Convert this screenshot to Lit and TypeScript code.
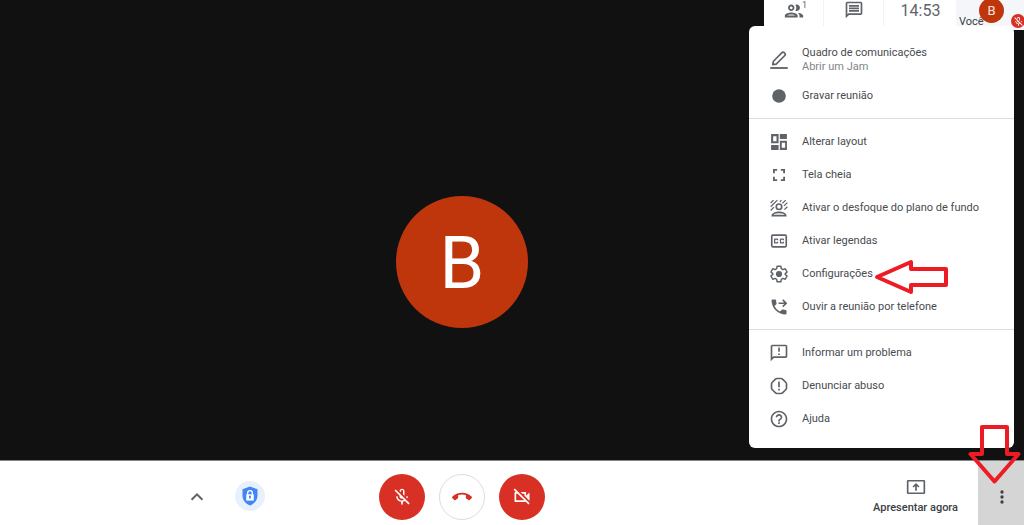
import { LitElement, html, svg, css, nothing } from "lit";
import { customElement } from "lit/decorators.js";

const ICONS = {
  people: svg`<path d="M9 13.75c-2.34 0-7 1.17-7 3.5V19h14v-1.75c0-2.33-4.66-3.5-7-3.5zM4.34 17c.84-.58 2.87-1.25 4.66-1.25s3.82.67 4.66 1.25H4.34zM9 12c1.93 0 3.5-1.57 3.5-3.5S10.93 5 9 5 5.5 6.57 5.5 8.5 7.07 12 9 12zm0-5c.83 0 1.5.67 1.5 1.5S9.83 10 9 10s-1.5-.67-1.5-1.5S8.17 7 9 7zm7.04 6.81c1.16.84 1.96 1.96 1.96 3.44V19h4v-1.75c0-2.02-3.5-3.17-5.96-3.44zM15 12c1.93 0 3.5-1.57 3.5-3.5S16.93 5 15 5c-.54 0-1.04.13-1.5.35.63.89 1 1.98 1 3.15s-.37 2.26-1 3.15c.46.22.96.35 1.5.35z"/>`,
  chat: svg`<path d="M4 4h16v12H5.17L4 17.17V4m0-2c-1.1 0-1.99.9-1.99 2L2 22l4-4h14c1.1 0 2-.9 2-2V4c0-1.1-.9-2-2-2H4zm2 10h12v2H6v-2zm0-3h12v2H6V9zm0-3h12v2H6V6z"/>`,
  jam: svg`<path d="M1.500 20.500h21v2.200h-21z"/><path fill="none" stroke="currentColor" stroke-width="2" stroke-linejoin="round" d="M4.500 17.500l.8-4L15.600 3.200a1.800 1.800 0 0 1 2.600 0l.8.8a1.800 1.800 0 0 1 0 2.600L8.600 16.900z"/>`,
  record: svg`<circle cx="12" cy="12" r="8.200"/>`,
  layout: svg`<path fill-rule="evenodd" d="M2.500 2.500h9v11h-9zM5 5v6h4V5zM13 2.500h8.500v6H13zM2.500 15.500h9v6h-9zM13 10.500h8.500v11H13zM15.300 13v6h4v-6z"/>`,
  fullscreen: svg`<path d="M4.800 4.800h5v2.200H7v3H4.800zM14.200 4.800h5v5.200H17V7h-2.800zM4.800 14H7v3h2.800v2.200h-5zM17 14h2.200v5.200h-5V17H17z"/>`,
  blur: svg`<g fill="none" stroke="currentColor" stroke-width="1.500"><circle cx="12" cy="10.500" r="3.300" stroke-width="2"/><path stroke-width="2.200" d="M4 21.200c0-2.500 4-4 8-4s8 1.500 8 4z"/><path d="M2 6L5.500 2.500M2 10.500L10 2.500M2 15l4-4M13 4.500l2-2M16 6.500l4-4M18 9.500L22 5.500M18.500 14L22 10.500"/></g>`,
  captions: svg`<path fill-rule="evenodd" d="M4.500 4h15A2.200 2.200 0 0 1 21.700 6.200v11.600A2.200 2.200 0 0 1 19.500 20h-15a2.200 2.200 0 0 1-2.200-2.200V6.200A2.200 2.200 0 0 1 4.500 4zM4.300 6v12h15.400V6z"/><path d="M11 11H9.500v-.5h-2v3h2V13H11v1c0 .55-.45 1-1 1H7c-.55 0-1-.45-1-1v-4c0-.55.45-1 1-1h3c.55 0 1 .45 1 1zM18 11h-1.500v-.5h-2v3h2V13H18v1c0 .55-.45 1-1 1h-3c-.55 0-1-.45-1-1v-4c0-.55.45-1 1-1h3c.55 0 1 .45 1 1z"/>`,
  settings: svg`<path fill="none" stroke="currentColor" stroke-width="1.800" stroke-linejoin="round" d="M9.800 2.700h4.400l.6 2.900 1.900 1.100 2.800-1 2.200 3.900-2.200 1.900v1l2.200 1.900-2.200 3.900-2.800-1-1.900 1.100-.6 2.900H9.800l-.6-2.900-1.900-1.100-2.800 1-2.200-3.900 2.200-1.900v-1L2.300 9.600l2.200-3.900 2.800 1 1.900-1.100z"/><circle cx="12" cy="12" r="3.700"/>`,
  phone: svg`<path d="M20 15.500c-1.250 0-2.450-.2-3.570-.57-.35-.11-.74-.03-1.020.24l-2.200 2.200c-2.830-1.440-5.150-3.750-6.590-6.580l2.200-2.210c.28-.27.36-.66.25-1.010C8.700 6.450 8.500 5.250 8.500 4c0-.55-.45-1-1-1H4c-.55 0-1 .45-1 1 0 9.390 7.610 17 17 17 .55 0 1-.45 1-1v-3.500c0-.55-.45-1-1-1z"/><path fill="none" stroke="currentColor" stroke-width="2" d="M11.500 7.500h8.500M16.500 3.500l4 4-4 4"/>`,
  feedback: svg`<path d="M20 2H4c-1.100 0-1.990.9-1.990 2L2 22l4-4h14c1.100 0 2-.9 2-2V4c0-1.100-.9-2-2-2zm0 14H5.170L4 17.170V4h16v12zM11 5.500h2v5h-2zM11 12.500h2v2h-2z"/>`,
  report: svg`<path fill="none" stroke="currentColor" stroke-width="2" stroke-linejoin="round" d="M9.500 3h5q1 0 1.700.7l4.100 4.100q.7.7.7 1.700v5q0 1-.7 1.700l-4.100 4.100q-.7.7-1.700.7h-5q-1 0-1.700-.7l-4.100-4.100Q3 15.500 3 14.500v-5q0-1 .7-1.700l4.100-4.100Q8.500 3 9.500 3z"/><path d="M11 6.500h2v7h-2zM11 15.200h2v2.200h-2z"/>`,
  help: svg`<path d="M11 18h2v-2h-2v2zm1-16C6.480 2 2 6.480 2 12s4.480 10 10 10 10-4.480 10-10S17.520 2 12 2zm0 18c-4.410 0-8-3.590-8-8s3.590-8 8-8 8 3.590 8 8-3.590 8-8 8zm0-14c-2.210 0-4 1.790-4 4h2c0-1.100.9-2 2-2s2 .9 2 2c0 2-3 1.750-3 5h2c0-2.250 3-2.500 3-5 0-2.210-1.790-4-4-4z"/>`,
  chevron: svg`<path fill="none" stroke="currentColor" stroke-width="2.400" d="M5.500 16.500L12 10l6.500 6.500"/>`,
  micOff: svg`<path d="M10.8 4.9c0-.66.54-1.2 1.2-1.2s1.2.54 1.2 1.2l-.01 3.91L15 10.6V5c0-1.66-1.34-3-3-3-1.54 0-2.79 1.16-2.96 2.65l1.76 1.76V4.9zM19 11h-1.7c0 .58-.1 1.13-.27 1.64l1.27 1.27c.44-.88.7-1.87.7-2.91zM4.41 2.86L3 4.27l6 6V11c0 1.66 1.34 3 3 3 .23 0 .44-.03.65-.08l1.66 1.66c-.71.33-1.5.52-2.31.52-2.76 0-5.3-2.1-5.3-5.1H5c0 3.41 2.72 6.23 6 6.72V21h2v-3.28c.91-.13 1.77-.45 2.55-.9l4.2 4.2 1.41-1.41L4.41 2.86z"/>`,
  hangUp: svg`<path d="M12 9c-1.600 0-3.150.25-4.600.72v3.100c0 .39-.23.74-.56.9-.98.49-1.870 1.120-2.660 1.850-.18.18-.43.28-.7.28-.28 0-.53-.11-.71-.29L.29 13.080c-.18-.17-.29-.42-.29-.7 0-.28.11-.53.29-.71C3.340 8.780 7.460 7 12 7s8.660 1.780 11.710 4.670c.18.18.29.43.29.71 0 .28-.11.53-.29.71l-2.480 2.480c-.18.18-.43.29-.71.29-.27 0-.52-.11-.7-.28-.79-.74-1.690-1.360-2.670-1.850-.33-.16-.56-.5-.56-.9v-3.100C15.150 9.250 13.600 9 12 9z"/>`,
  camOff: svg`<path d="M9.560 8l-2-2-4.150-4.140L2 3.270 4.730 6H4c-.55 0-1 .45-1 1v10c0 .55.45 1 1 1h12c.21 0 .39-.08.55-.18L19.730 21l1.410-1.410-8.860-8.860L9.560 8zM5 16V8h1.730l8 8H5zm10-8v2.610l6 6V6.500l-4 4V7c0-.55-.45-1-1-1h-5.610l2 2H15z"/>`,
  present: svg`<path fill-rule="evenodd" d="M2.500 3.500h19A1.500 1.500 0 0 1 23 5v14a1.500 1.500 0 0 1-1.500 1.500h-19A1.500 1.500 0 0 1 1 19V5a1.500 1.500 0 0 1 1.500-1.500zM3 5.500v13h18v-13z"/><path fill="none" stroke="currentColor" stroke-width="2" d="M12 16.500V9M8.500 12L12 8.500l3.500 3.500"/>`,
  more: svg`<circle cx="12" cy="6" r="2"/><circle cx="12" cy="12" r="2"/><circle cx="12" cy="18" r="2"/>`,
  shield: svg`<path fill="#4285f4" d="M12 .5l9 3.400v7.600c0 6-4.200 10-9 12-4.800-2-9-6-9-12V3.900z"/><path fill="#fff" d="M7.500 10h9v7.500h-9z"/><path fill="none" stroke="#fff" stroke-width="1.600" d="M9.200 10.500V8.300a2.800 2.800 0 0 1 5.600 0v2.200"/><circle cx="12" cy="12.800" r="1.300" fill="#4285f4"/><path fill="#4285f4" d="M11.400 13h1.200v2.600h-1.200z"/>`,
};

type IconName = keyof typeof ICONS;

const icon = (name: IconName, size = "md") =>
  html`<svg class="icon ${size}" viewBox="0 0 24 24" fill="currentColor" aria-hidden="true">${ICONS[name]}</svg>`;

interface MenuItem {
  icon: IconName;
  label: string;
  hint?: string;
  marked?: boolean;
}

const MENU: MenuItem[][] = [
  [
    { icon: "jam", label: "Quadro de comunicações", hint: "Abrir um Jam" },
    { icon: "record", label: "Gravar reunião" },
  ],
  [
    { icon: "layout", label: "Alterar layout" },
    { icon: "fullscreen", label: "Tela cheia" },
    { icon: "blur", label: "Ativar o desfoque do plano de fundo" },
    { icon: "captions", label: "Ativar legendas" },
    { icon: "settings", label: "Configurações", marked: true },
    { icon: "phone", label: "Ouvir a reunião por telefone" },
  ],
  [
    { icon: "feedback", label: "Informar um problema" },
    { icon: "report", label: "Denunciar abuso" },
    { icon: "help", label: "Ajuda" },
  ],
];

const base = css`
  * {
    box-sizing: border-box;
  }
  button {
    font: inherit;
    color: inherit;
    border: 0;
    padding: 0;
    margin: 0;
    background: none;
    cursor: pointer;
  }
  .icon {
    display: block;
    flex: none;
    width: 20px;
    height: 20px;
  }
  .icon.sm {
    width: 11px;
    height: 11px;
  }
  .icon.lg {
    width: 22px;
    height: 22px;
  }
  .arrow {
    position: absolute;
    fill: none;
    stroke: #ed1c24;
    stroke-width: 4;
    stroke-linejoin: round;
    pointer-events: none;
  }
`;

@customElement("options-menu")
export class OptionsMenu extends LitElement {
  static styles = [
    base,
    css`
      :host {
        display: block;
        width: 265px;
        padding: 7px 0;
        border-radius: 6px;
        background: #fff;
        color: #484b4f;
        font-size: 11px;
        line-height: 14px;
      }
      .group {
        list-style: none;
        margin: 0;
        padding: 6px 0;
      }
      .group + .group {
        border-top: 1px solid #dadce0;
      }
      .row {
        position: relative;
      }
      .item {
        display: flex;
        align-items: center;
        gap: 13px;
        width: 100%;
        min-height: 33px;
        padding: 0 20px;
        text-align: left;
      }
      .item.tall {
        min-height: 40px;
        padding-top: 2px;
      }
      .item .icon {
        color: #5f6368;
      }
      .text {
        display: flex;
        flex-direction: column;
      }
      .hint {
        color: #80868b;
      }
      .arrow {
        left: 125px;
        top: 2px;
        width: 76px;
        height: 36px;
      }
    `,
  ];

  private row(item: MenuItem) {
    return html`<li class="row" role="none">
      <button class="item ${item.hint ? "tall" : ""}" role="menuitem">
        ${icon(item.icon)}
        <span class="text">
          <span>${item.label}</span>
          ${item.hint ? html`<span class="hint">${item.hint}</span>` : nothing}
        </span>
      </button>
      ${item.marked
        ? html`<svg class="arrow" viewBox="0 0 76 36" aria-hidden="true">
            <path d="M3 18L37 3v7h35v16H37v7z" />
          </svg>`
        : nothing}
    </li>`;
  }

  render() {
    return MENU.map(
      (group) => html`<ul class="group" role="menu">${group.map((item) => this.row(item))}</ul>`
    );
  }
}

@customElement("meeting-status")
export class MeetingStatus extends LitElement {
  static styles = [
    base,
    css`
      :host {
        display: flex;
        height: 30px;
        background: #fff;
        color: #5f6368;
      }
      .cell {
        display: flex;
        justify-content: center;
        align-items: flex-start;
        width: 60px;
        border-right: 1px solid #f1f3f4;
      }
      .count {
        margin-left: -3px;
        font-size: 9px;
        line-height: 10px;
      }
      .people {
        padding-left: 3px;
      }
      .clock {
        width: 72px;
        padding-left: 1px;
        border-right: 0;
        font-size: 16px;
        line-height: 21px;
      }
      .self {
        position: relative;
        display: flex;
        align-items: flex-end;
        width: 68px;
        padding: 0 0 1px 3px;
        background: #f5f6fa;
        color: #3c4043;
        font-size: 11px;
        line-height: 14px;
      }
      .avatar {
        position: absolute;
        right: 20px;
        bottom: 7px;
        width: 25px;
        height: 25px;
        border-radius: 50%;
        background: #c0360c;
        color: #f6e4de;
        font-size: 13px;
        line-height: 25px;
        text-align: center;
      }
      .muted {
        position: absolute;
        right: -1px;
        bottom: 2px;
        display: grid;
        place-items: center;
        width: 14px;
        height: 14px;
        border-radius: 50%;
        background: #d93025;
        color: #fff;
      }
    `,
  ];

  render() {
    return html`
      <button class="cell people" aria-label="Pessoas">
        ${icon("people", "lg")}<span class="count">1</span>
      </button>
      <button class="cell" aria-label="Chat">${icon("chat")}</button>
      <time class="cell clock">14:53</time>
      <div class="self">
        <span>Você</span>
        <span class="avatar">B</span>
        <span class="muted">${icon("micOff", "sm")}</span>
      </div>
    `;
  }
}

@customElement("call-bar")
export class CallBar extends LitElement {
  static styles = [
    base,
    css`
      :host {
        display: grid;
        grid-template-columns: 1fr auto 1fr 100px;
        height: 65px;
        border-top: 1px solid #80868b;
        background: #fff;
        color: #3c4043;
      }
      .left,
      .calls,
      .right {
        display: flex;
        align-items: center;
      }
      .left {
        justify-content: flex-end;
        gap: 28px;
        padding: 6px 114px 0 0;
      }
      .chevron {
        color: #5f6368;
      }
      .safe {
        display: grid;
        place-items: center;
        width: 30px;
        height: 30px;
        border-radius: 50%;
        background: #e8f0fe;
      }
      .calls {
        gap: 14px;
        padding-top: 8px;
      }
      .call {
        display: grid;
        place-items: center;
        width: 46px;
        height: 46px;
        border-radius: 50%;
        background: #d93025;
        color: #fff;
      }
      .call.end {
        border: 1px solid #dadce0;
        background: #fff;
        color: #d93025;
      }
      .right {
        grid-column: 3 / 5;
        justify-content: flex-end;
        align-items: stretch;
        gap: 20px;
      }
      .present {
        display: flex;
        flex-direction: column;
        align-items: center;
        justify-content: center;
        gap: 3px;
        padding-top: 6px;
        font-size: 11px;
        font-weight: 500;
        line-height: 16px;
      }
      .present .icon {
        color: #5f6368;
      }
      .menu {
        position: relative;
        display: flex;
      }
      .more {
        display: grid;
        place-items: center;
        width: 46px;
        padding: 8px 0 0 2px;
        background: #d5d5d5;
      }
      .arrow {
        right: 2px;
        bottom: 41px;
        width: 54px;
        height: 60px;
      }
    `,
  ];

  render() {
    return html`
      <div class="left">
        <button class="chevron" aria-label="Detalhes da reunião">${icon("chevron")}</button>
        <button class="safe" aria-label="Controles do organizador">${icon("shield")}</button>
      </div>
      <div class="calls">
        <button class="call" aria-label="Ativar microfone">${icon("micOff")}</button>
        <button class="call end" aria-label="Sair da chamada">${icon("hangUp")}</button>
        <button class="call" aria-label="Ativar câmera">${icon("camOff")}</button>
      </div>
      <div class="right">
        <button class="present">${icon("present")}<span>Apresentar agora</span></button>
        <div class="menu">
          <button class="more" aria-label="Mais opções">${icon("more")}</button>
          <svg class="arrow" viewBox="0 0 54 60" aria-hidden="true">
            <path d="M26.500 57.500L2.500 30H14V3h25v27h11.500z" />
          </svg>
        </div>
      </div>
    `;
  }
}

@customElement("app-root")
export class AppRoot extends LitElement {
  static styles = [
    base,
    css`
      :host {
        display: block;
        font-family: Roboto, "Liberation Sans", sans-serif;
      }
      .page {
        position: relative;
        display: flex;
        flex-direction: column;
        min-height: 100vh;
        overflow: hidden;
        background: #111;
      }
      .stage {
        flex: 1;
        display: grid;
        place-items: center;
        padding: 64px 100px 0 0;
      }
      .avatar {
        display: grid;
        place-items: center;
        width: 132px;
        height: 132px;
        padding-top: 4px;
        border-radius: 50%;
        background: #c0360c;
        color: #fff;
        font-size: 72px;
        line-height: 84px;
      }
      .status {
        position: absolute;
        top: 0;
        right: 0;
      }
      .options {
        position: absolute;
        right: 10px;
        bottom: 77px;
      }
    `,
  ];

  render() {
    return html`
      <div class="page">
        <main class="stage"><div class="avatar">B</div></main>
        <meeting-status class="status"></meeting-status>
        <options-menu class="options"></options-menu>
        <call-bar></call-bar>
      </div>
    `;
  }
}
